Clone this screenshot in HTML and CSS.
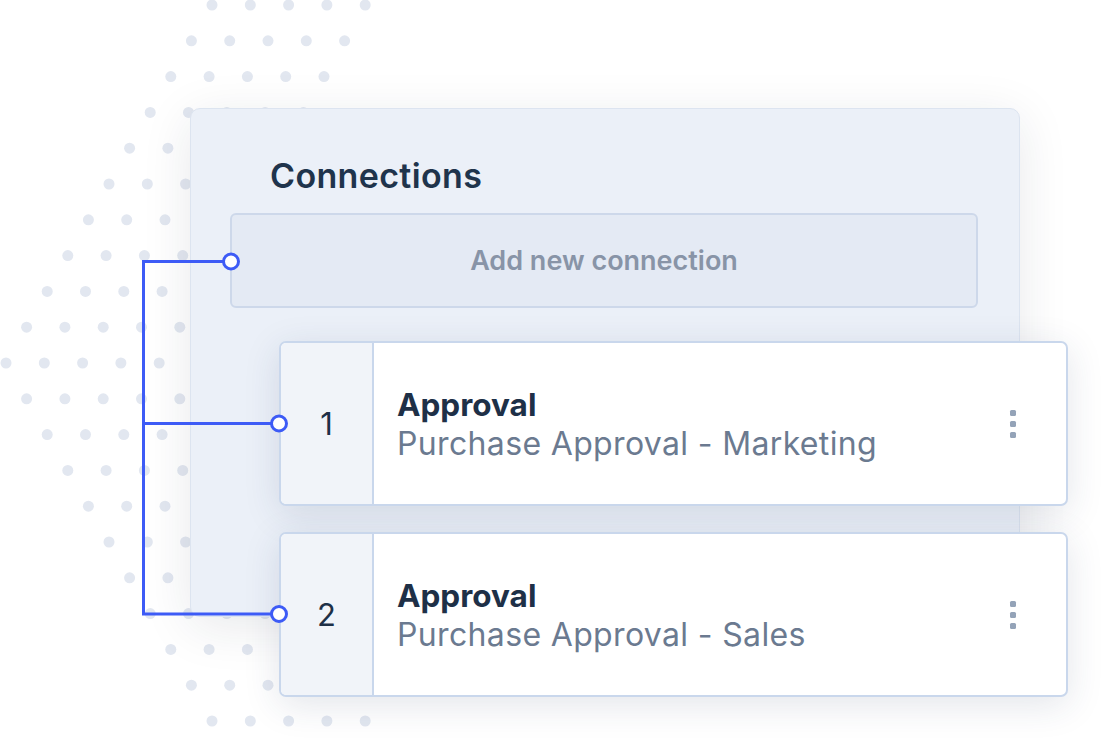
FILE: index.html
```html
<!DOCTYPE html>
<html lang="en">
<head>
<meta charset="utf-8">
<title>Connections</title>
<link rel="stylesheet" href="styles.css">
</head>
<body>
<div class="stage">
  <svg class="dots" width="1110" height="739" viewBox="0 0 1110 739" aria-hidden="true">
    <defs>
      <g id="row">
        <circle cx="0" cy="0" r="5.5"/>
        <circle cx="38.3" cy="0" r="5.5"/>
        <circle cx="76.6" cy="0" r="5.5"/>
        <circle cx="114.9" cy="0" r="5.5"/>
        <circle cx="153.2" cy="0" r="5.5"/>
      </g>
    </defs>
    <g fill="#e2e7f0">
      <use href="#row" x="212" y="5"/>
      <use href="#row" x="191.4" y="40.8"/>
      <use href="#row" x="170.8" y="76.6"/>
      <use href="#row" x="150.2" y="112.4"/>
      <use href="#row" x="129.6" y="148.2"/>
      <use href="#row" x="109" y="184"/>
      <use href="#row" x="88.4" y="219.8"/>
      <use href="#row" x="67.8" y="255.6"/>
      <use href="#row" x="47.2" y="291.4"/>
      <use href="#row" x="26.6" y="327.2"/>
      <use href="#row" x="6" y="363"/>
      <use href="#row" x="26.6" y="398.8"/>
      <use href="#row" x="47.2" y="434.6"/>
      <use href="#row" x="67.8" y="470.4"/>
      <use href="#row" x="88.4" y="506.2"/>
      <use href="#row" x="109" y="542"/>
      <use href="#row" x="129.6" y="577.8"/>
      <use href="#row" x="150.2" y="613.6"/>
      <use href="#row" x="170.8" y="649.4"/>
      <use href="#row" x="191.4" y="685.2"/>
      <use href="#row" x="212" y="721"/>
    </g>
  </svg>

  <section class="panel">
    <h2 class="panel-title">Connections</h2>
    <div class="add-box">Add new connection</div>
    <div class="card">
      <div class="card-num">1</div>
      <div class="card-body">
        <div class="card-title">Approval</div>
        <div class="card-sub">Purchase Approval - Marketing</div>
      </div>
      <div class="card-menu"><span></span><span></span><span></span></div>
    </div>
    <div class="card">
      <div class="card-num">2</div>
      <div class="card-body">
        <div class="card-title">Approval</div>
        <div class="card-sub">Purchase Approval - Sales</div>
      </div>
      <div class="card-menu"><span></span><span></span><span></span></div>
    </div>
  </section>

  <svg class="wires" width="1110" height="739" viewBox="0 0 1110 739" aria-hidden="true">
    <g fill="none" stroke="#3d5bf6" stroke-width="3">
      <path d="M231 261.5 H143.5 V614 H279"/>
      <path d="M143.5 423.5 H279"/>
    </g>
    <g fill="#ffffff" stroke="#3d5bf6" stroke-width="3">
      <circle cx="231" cy="261.5" r="7.5"/>
      <circle cx="279" cy="423.5" r="7.5"/>
      <circle cx="279" cy="614" r="7.5"/>
    </g>
  </svg>
</div>
</body>
</html>
```

FILE: styles.css
```css
html, body {
  margin: 0;
  padding: 0;
  background: #ffffff;
}

body {
  font-family: Inter, "Noto Sans", "Liberation Sans", sans-serif;
}

.stage {
  position: relative;
  width: 1110px;
  height: 739px;
  overflow: hidden;
  padding-top: 108px;
  box-sizing: border-box;
}

.dots {
  position: absolute;
  left: 0;
  top: 0;
  z-index: 0;
}

.wires {
  position: absolute;
  left: 0;
  top: 0;
  z-index: 3;
}

.panel {
  position: relative;
  z-index: 1;
  margin-left: 190px;
  width: 830px;
  height: 509px;
  box-sizing: border-box;
  padding: 47px 0 0 39px;
  background: #ebf0f8;
  border: 1px solid #dce4f0;
  border-radius: 10px;
  box-shadow: 0 10px 50px rgba(30, 40, 60, 0.1);
}

.panel-title {
  margin: 0 0 17px 40px;
  font-size: 34px;
  line-height: 40px;
  font-weight: 600;
  color: #1f344c;
  letter-spacing: 0.35px;
}

.add-box {
  display: flex;
  align-items: center;
  justify-content: center;
  width: 748px;
  height: 95px;
  box-sizing: border-box;
  background: #e4eaf4;
  border: 2px solid #cdd8ea;
  border-radius: 6px;
  font-size: 27px;
  font-weight: 600;
  color: #8894a7;
}

.card {
  display: flex;
  align-items: stretch;
  width: 789px;
  height: 165px;
  box-sizing: border-box;
  margin: 33px 0 0 49px;
  background: #ffffff;
  border: 2px solid #c9d7ec;
  border-radius: 7px;
  box-shadow: 0 8px 36px rgba(35, 55, 95, 0.13);
  overflow: hidden;
}

.card + .card {
  margin-top: 26px;
}

.card-num {
  flex: 0 0 91px;
  display: flex;
  align-items: center;
  justify-content: center;
  background: #f1f4f9;
  border-right: 2px solid #c9d7ec;
  font-size: 31px;
  font-weight: 400;
  color: #1e3047;
}

.card-body {
  flex: 1;
  display: flex;
  flex-direction: column;
  justify-content: center;
  padding-left: 23px;
}

.card-title {
  font-size: 31.5px;
  line-height: 39px;
  font-weight: 700;
  color: #1e3047;
}

.card-sub {
  font-size: 32px;
  line-height: 39px;
  font-weight: 400;
  letter-spacing: 0.35px;
  color: #6b7a90;
}

.card-menu {
  display: flex;
  flex-direction: column;
  justify-content: center;
  gap: 5px;
  padding-right: 50px;
}

.card-menu span {
  display: block;
  width: 6px;
  height: 6px;
  border-radius: 1.5px;
  background: #94a3b8;
}
```
